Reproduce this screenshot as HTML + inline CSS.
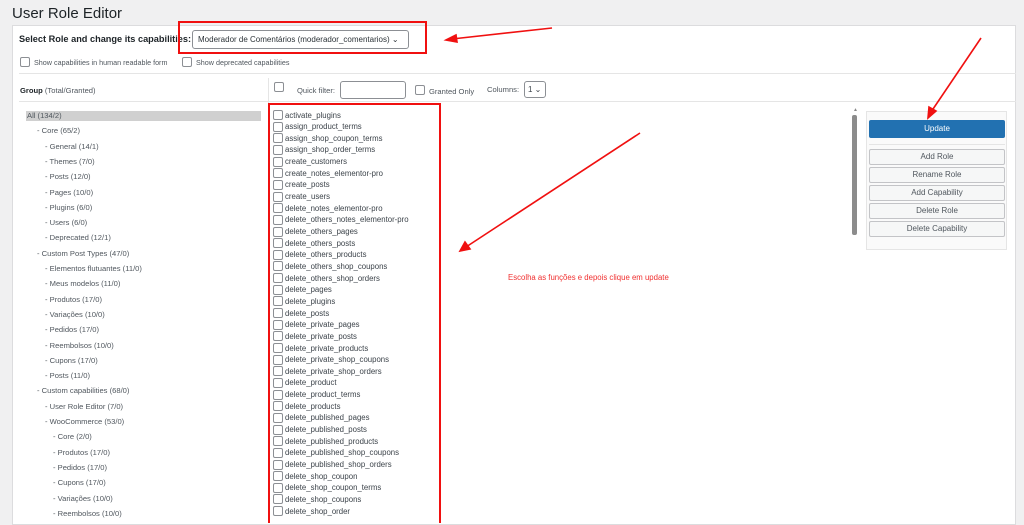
<!DOCTYPE html>
<html><head><meta charset="utf-8"><style>
*{margin:0;padding:0;box-sizing:border-box}
body{width:1024px;height:516px;overflow:hidden;background:#f0f0f1;font-family:"Liberation Sans",sans-serif;color:#3c434a;position:relative}
.a{position:absolute;white-space:nowrap}
.cb{position:absolute;width:10px;height:10px;border:1px solid #8c8f94;border-radius:2px;background:#fff}
.t{font-size:7.6px;color:#50575e}
.cap{position:absolute;left:285px;font-size:7.8px;color:#3c434a}
.btn{position:absolute;left:869px;width:136px;height:16px;border:1px solid #c3c4c7;background:#f6f7f7;border-radius:2px;font-size:8px;color:#50575e;text-align:center;line-height:14px}
</style></head><body>
<div class="a" style="left:12px;top:5px;font-size:15px;color:#1d2327">User Role Editor</div>
<div class="a" style="left:12px;top:25px;width:1004px;height:500px;background:#fff;border:1px solid #dcdcde"></div>
<div class="a" style="left:19px;top:34px;font-size:9.2px;font-weight:bold;color:#1d2327">Select Role and change its capabilities:</div>
<div class="a" style="left:192px;top:30px;width:217px;height:19px;border:1px solid #8c8f94;border-radius:3px;font-size:8px;color:#2c3338;padding:4px 0 0 5px;background:#fff">Moderador de Comentários (moderador_comentarios) ⌄</div>
<div class="a" style="left:178px;top:21px;width:249px;height:33px;border:2px solid #f01010"></div>
<div class="cb" style="left:20px;top:57px"></div><div class="a t" style="left:34px;top:58px;font-size:7.2px">Show capabilities in human readable form</div>
<div class="cb" style="left:182px;top:57px"></div><div class="a t" style="left:196px;top:58px;font-size:7.2px">Show deprecated capabilities</div>
<div class="a" style="left:19px;top:73px;width:997px;height:1px;background:#e5e5e5"></div>
<div class="a" style="left:268px;top:78px;width:1px;height:440px;background:#e5e5e5"></div>
<div class="a" style="left:19px;top:101px;width:997px;height:1px;background:#e5e5e5"></div>
<div class="a" style="left:20px;top:86px;font-size:7.6px;color:#1d2327"><b>Group</b> <span style="color:#50575e">(Total/Granted)</span></div>
<div class="cb" style="left:274px;top:82px"></div>
<div class="a t" style="left:297px;top:86px">Quick filter:</div>
<div class="a" style="left:340px;top:81px;width:66px;height:18px;border:1px solid #8c8f94;border-radius:3px"></div>
<div class="cb" style="left:415px;top:85px"></div><div class="a t" style="left:429px;top:87px">Granted Only</div>
<div class="a t" style="left:487px;top:85px">Columns:</div>
<div class="a" style="left:524px;top:81px;width:22px;height:17px;border:1px solid #8c8f94;border-radius:3px;font-size:8px;padding:3px 0 0 3px">1 ⌄</div>
<div class="a" style="left:26px;top:111px;width:235px;height:10px;background:#d0d0d0"></div>
<div class="a" style="left:268px;top:103px;width:173px;height:420px;border:2px solid #f01010;border-bottom:none"></div>
<div class="a" style="left:852px;top:115px;width:5px;height:120px;background:#8c8c8c;border-radius:2px"></div>
<div class="a" style="left:853px;top:107px;font-size:5px;color:#888">▲</div>
<div class="a" style="left:866px;top:111px;width:141px;height:139px;border:1px solid #e5e5e5;background:#fafafa"></div>
<div class="a" style="left:869px;top:120px;width:136px;height:18px;background:#2271b1;border-radius:2px;color:#fff;font-size:8px;text-align:center;line-height:18px">Update</div>
<div class="a" style="left:869px;top:144px;width:136px;height:1px;background:#e5e5e5"></div>
<div class="btn" style="top:149px">Add Role</div>
<div class="btn" style="top:167px">Rename Role</div>
<div class="btn" style="top:185px">Add Capability</div>
<div class="btn" style="top:203px">Delete Role</div>
<div class="btn" style="top:221px">Delete Capability</div>
<div class="a" style="left:508px;top:273px;font-size:7.8px;color:#f03030">Escolha as funções e depois clique em update</div>
<svg class="a" style="left:0;top:0" width="1024" height="516">
<g stroke="#f01010" stroke-width="1.6" fill="#f01010">
<line x1="552" y1="28" x2="452" y2="39"/><polygon points="446,40 456,35 457,42"/>
<line x1="981" y1="38" x2="931" y2="112"/><polygon points="928,118 929,107 936,111"/>
<line x1="640" y1="133" x2="466" y2="247"/><polygon points="460,251 465,242 470,249"/>
</g></svg>
<div id="caps"></div>
<script>
var tr=[["All (134/2)",27],["- Core (65/2)",37],["- General (14/1)",45],["- Themes (7/0)",45],["- Posts (12/0)",45],["- Pages (10/0)",45],["- Plugins (6/0)",45],["- Users (6/0)",45],["- Deprecated (12/1)",45],["- Custom Post Types (47/0)",37],["- Elementos flutuantes (11/0)",45],["- Meus modelos (11/0)",45],["- Produtos (17/0)",45],["- Variações (10/0)",45],["- Pedidos (17/0)",45],["- Reembolsos (10/0)",45],["- Cupons (17/0)",45],["- Posts (11/0)",45],["- Custom capabilities (68/0)",37],["- User Role Editor (7/0)",45],["- WooCommerce (53/0)",45],["- Core (2/0)",53],["- Produtos (17/0)",53],["- Pedidos (17/0)",53],["- Cupons (17/0)",53],["- Variações (10/0)",53],["- Reembolsos (10/0)",53]];
var h="";tr.forEach(function(r,i){h+='<div class="a t" style="left:'+r[1]+'px;top:'+(111+i*15.3)+'px">'+r[0]+'</div>'});
var c="activate_plugins assign_product_terms assign_shop_coupon_terms assign_shop_order_terms create_customers create_notes_elementor-pro create_posts create_users delete_notes_elementor-pro delete_others_notes_elementor-pro delete_others_pages delete_others_posts delete_others_products delete_others_shop_coupons delete_others_shop_orders delete_pages delete_plugins delete_posts delete_private_pages delete_private_posts delete_private_products delete_private_shop_coupons delete_private_shop_orders delete_product delete_product_terms delete_products delete_published_pages delete_published_posts delete_published_products delete_published_shop_coupons delete_published_shop_orders delete_shop_coupon delete_shop_coupon_terms delete_shop_coupons delete_shop_order".split(" ");
c.forEach(function(s,i){var y=110+i*11.65;h+='<div class="cb" style="left:273px;top:'+y+'px"></div><div class="cap" style="top:'+(y+0.5)+'px">'+s+'</div>'});
document.getElementById("caps").innerHTML=h;
</script>
</body></html>
